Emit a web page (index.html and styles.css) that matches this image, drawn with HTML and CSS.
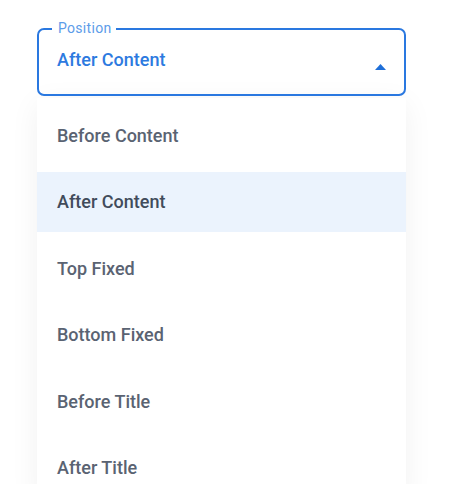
FILE: index.html
```html
<!DOCTYPE html>
<html>
<head>
    <meta charset="utf-8">
    <title>Position select</title>
    <link rel="stylesheet" href="styles.css">
</head>
<body>
    <div class="select">
        <div class="field">
            <span class="field-label">Position</span>
            <span class="field-value">After Content</span>
            <svg class="arrow" width="11" height="6" viewBox="0 0 11 6">
                <path d="M0 6 L5.5 0 L11 6 Z" fill="#1f6fd8"/>
            </svg>
        </div>
        <ul class="menu">
            <li class="item">Before Content</li>
            <li class="item selected">After Content</li>
            <li class="item">Top Fixed</li>
            <li class="item">Bottom Fixed</li>
            <li class="item">Before Title</li>
            <li class="item">After Title</li>
        </ul>
    </div>
</body>
</html>
```

FILE: styles.css
```css
html, body {
    margin: 0;
    background: #ffffff;
    font-family: Roboto, "Liberation Sans", sans-serif;
    overflow: hidden;
}

.select {
    width: 369px;
    margin: 0 0 0 37px;
    padding-top: 28px;
}

.field {
    position: relative;
    height: 68px;
    box-sizing: border-box;
    border: 2px solid #2a78e0;
    border-radius: 7px;
    padding: 0 18px 0 18px;
    display: flex;
    justify-content: space-between;
}

.field-label {
    position: absolute;
    top: -10px;
    left: 13px;
    padding: 0 5px 0 6px;
    background: #ffffff;
    font-size: 14px;
    line-height: 16px;
    letter-spacing: 0.3px;
    color: #5c9ce9;
}

.field-value {
    margin-top: 19px;
    font-size: 18px;
    line-height: 22px;
    font-weight: 500;
    color: #2d7ae0;
}

.arrow {
    margin-top: 34px;
}

.menu {
    list-style: none;
    margin: 2px 0 0 0;
    padding: 7px 0 0 0;
    background: #ffffff;
    box-shadow: 0 6px 28px rgba(0, 0, 0, 0.06);
    display: flex;
    flex-direction: column;
    gap: 6.6px;
}

.item {
    height: 60px;
    display: flex;
    align-items: center;
    padding: 0 20px;
    font-size: 18px;
    font-weight: 500;
    color: #5a6372;
}

.item.selected {
    background: #ebf3fd;
    color: #414b5b;
}
```
